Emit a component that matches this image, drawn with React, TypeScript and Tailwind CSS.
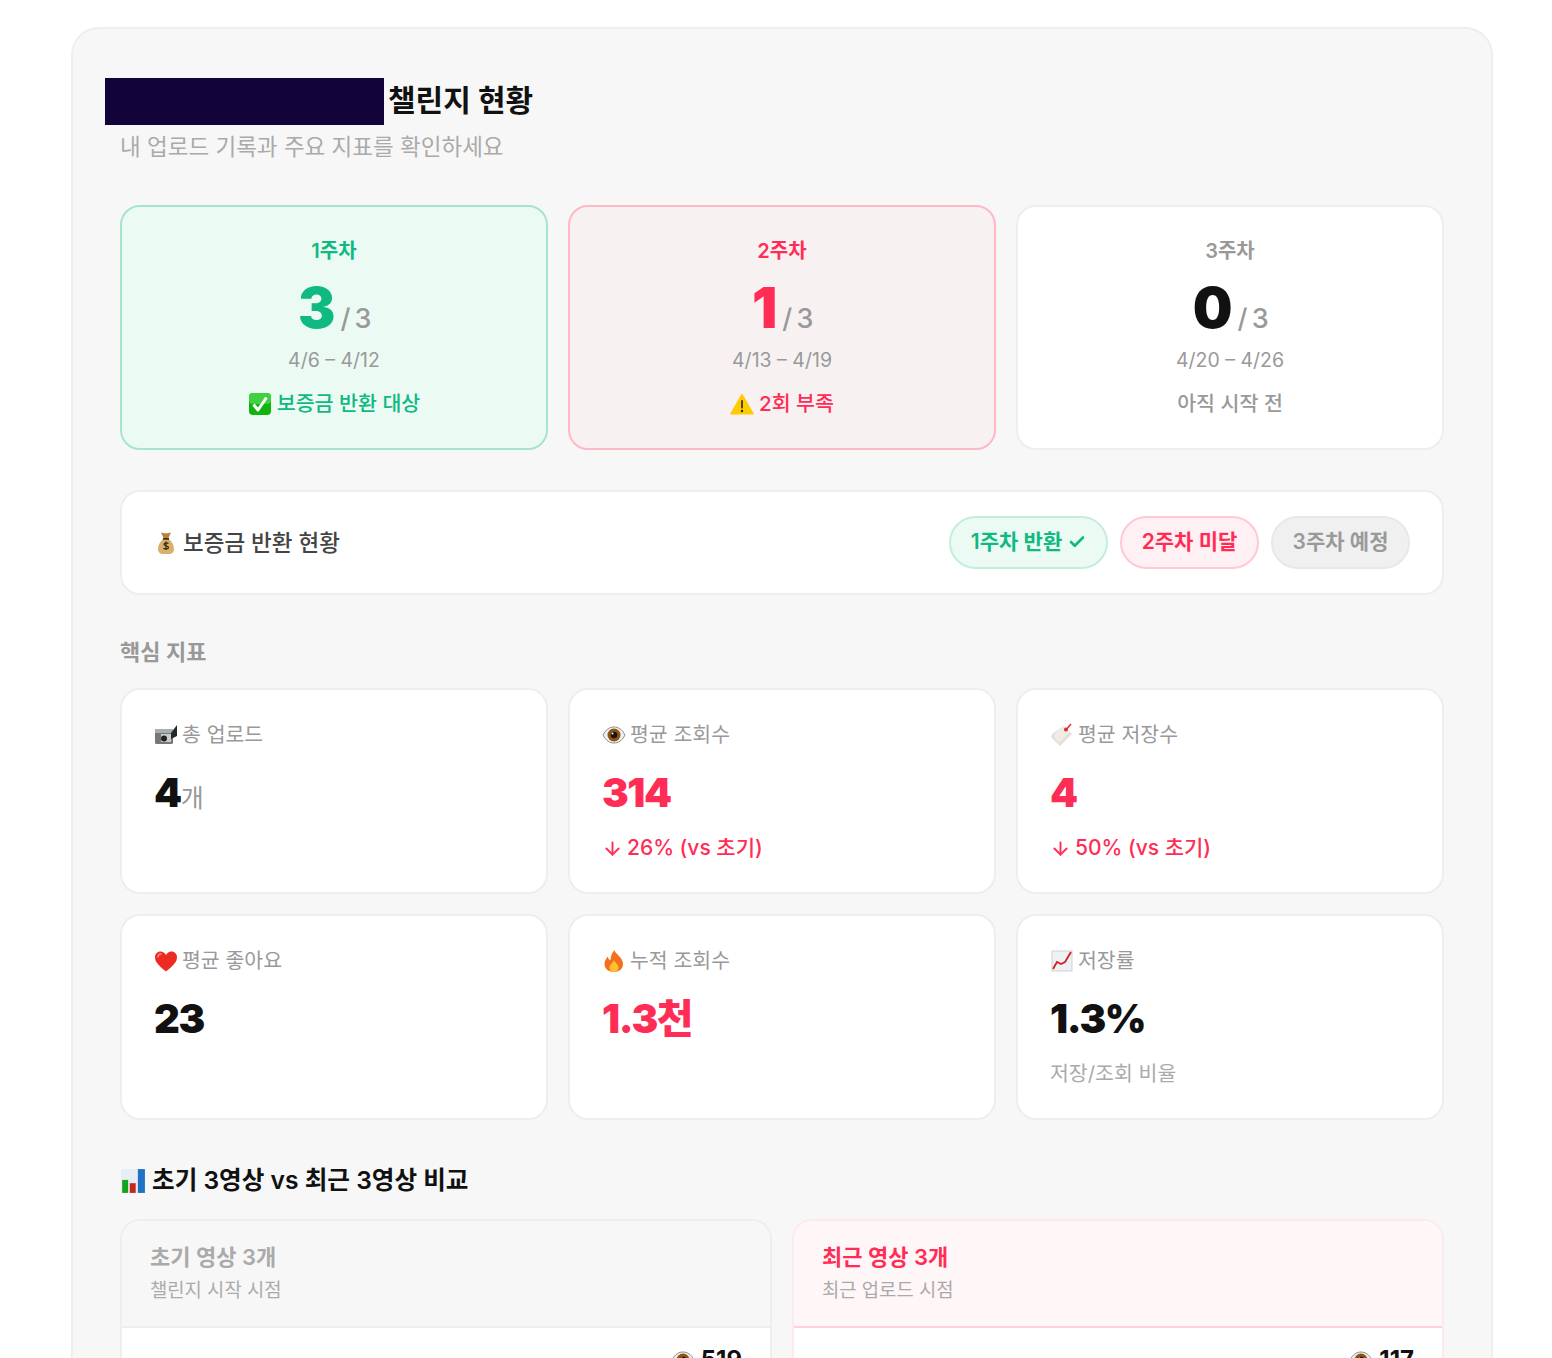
import { FC } from 'react';
import { Check, ArrowDown } from 'lucide-react';

const CheckEmoji = () => (
  <svg width="24" height="24" viewBox="0 0 24 24">
    <rect x="1" y="1" width="22" height="22" rx="4" fill="#0fb40f" />
    <rect x="1" y="1" width="22" height="11" rx="4" fill="#3fd13f" />
    <path d="M5.500 12.500 10 18 18.500 5.500" fill="none" stroke="#fff" strokeWidth="3" strokeLinejoin="round" />
  </svg>
);

const WarningEmoji = () => (
  <svg width="24" height="22" viewBox="0 0 24 22">
    <path d="M12 1 23.500 21H.5z" fill="#fc0" stroke="#fc0" strokeLinejoin="round" />
    <rect x="11.200" y="7" width="1.600" height="8.500" rx=".8" fill="#222" />
    <circle cx="12" cy="18" r="1.200" fill="#222" />
  </svg>
);

const MoneyBag = () => (
  <svg width="22" height="24" viewBox="0 0 22 24">
    <path d="M6 1.500c2 1 8 1 10 0l-3 6.500H9z" fill="#b5813c" />
    <path d="M8 8h6c3.500 3 5 7 5 10 0 3.500-2 5-5 5H8c-3 0-5-1.500-5-5 0-3 1.500-7 5-10z" fill="#d8b06c" />
    <rect x="8" y="7" width="6" height="1.800" fill="#4a3216" />
    <path d="M13.500 12.500c-1-1-4.500-1-4.500.8s4.500 1.200 4.500 3.200-3.500 1.700-5 .7M11 10.500v8.500" fill="none" stroke="#3e2a12" strokeWidth="1.300" />
  </svg>
);

const CameraEmoji = () => (
  <svg width="24" height="24" viewBox="0 0 24 24">
    <rect x="1" y="6" width="18" height="15" rx="1.500" fill="#74787b" />
    <rect x="1" y="6" width="18" height="4" fill="#a9adaf" />
    <path d="M17 10 23 2v11l-6 3z" fill="#26282a" />
    <rect x="7" y="11" width="10" height="8" fill="#c9cccd" />
    <circle cx="10" cy="15.500" r="3" fill="#222" />
  </svg>
);

const EyeEmoji = () => (
  <svg width="24" height="24" viewBox="0 0 24 24">
    <path d="M1 12c3-6 7-8 11-8s8 2 11 8c-3 6-7 8-11 8S4 18 1 12z" fill="#f1efec" stroke="#8f8f8f" />
    <circle cx="12" cy="12" r="6.500" fill="#8a5514" />
    <circle cx="12" cy="12" r="3.300" fill="#1c1207" />
    <circle cx="10.500" cy="10.500" r="1" fill="#fff" />
  </svg>
);

const TagEmoji = () => (
  <svg width="24" height="24" viewBox="0 0 24 24">
    <path d="M14 3 22 11 10 23 1 14 3 10z" fill="#e3dfd8" />
    <path d="M14 3 20 9 9 20 4 14 5 10z" fill="#efece6" />
    <path d="M15 8 21 1" stroke="#e0302a" strokeWidth="1.500" />
    <circle cx="16" cy="6.500" r="2" fill="#e0302a" />
  </svg>
);

const HeartEmoji = () => (
  <svg width="24" height="24" viewBox="0 0 24 24">
    <path d="M12 22.500C4 16 1 12.500 1 8.200 1 4.800 3.500 2.500 6.500 2.500c2.300 0 4.300 1.300 5.500 3.500 1.200-2.200 3.200-3.500 5.500-3.500 3 0 5.500 2.300 5.500 5.700 0 4.300-3 7.800-11 14.300z" fill="#ec2c22" />
    <path d="M4 8c0-2 1.500-3 3-3" fill="none" stroke="#ff8a80" strokeWidth="1.500" strokeLinecap="round" />
  </svg>
);

const FireEmoji = () => (
  <svg width="24" height="24" viewBox="0 0 24 24">
    <path d="M12.500 1c.5 4 8.500 7 8.500 14 0 5-4 8-9 8s-9.500-3-9.500-8c0-3 1.500-5.500 3.500-7.500 0 2 1 3.500 2.500 3.500 0-4 1.500-7 4-10z" fill="#f4701c" />
    <path d="M12 11c.5 2.500 4.500 4 4.500 7.500 0 2.500-2 4.500-4.500 4.500s-4.500-2-4.500-4.500c0-3 3.500-4 4.500-7.500z" fill="#fdc02f" />
  </svg>
);

const ChartUpEmoji = () => (
  <svg width="24" height="24" viewBox="0 0 24 24">
    <rect x="2" y="2" width="20" height="20" fill="#eef1f4" stroke="#cdd3d8" />
    <path d="M3 20 7 13 11 15 15 13 21 3" fill="none" stroke="#d4211b" strokeWidth="1.800" />
  </svg>
);

const BarChartEmoji = () => (
  <svg width="26" height="26" viewBox="0 0 24 24">
    <rect x="1" y="1" width="22" height="22" fill="#e6edf3" />
    <rect x="2" y="11" width="5.500" height="12" fill="#12a51c" />
    <rect x="9" y="14" width="5.500" height="9" fill="#c8281c" />
    <rect x="16.500" y="1" width="6.500" height="22" fill="#1f72c4" />
  </svg>
);

const tones = {
  green: { card: 'bg-[#ebfbf4] border-[#a6e5c9]', text: 'text-[#10b981]' },
  red: { card: 'bg-[#f7f1f2] border-[#ffb8c5]', text: 'text-[#ff2d55]' },
  gray: { card: 'bg-white border-[#eeeeee]', text: 'text-[#999999]' },
};

const WeekCard: FC<{
  tone: 'green' | 'red' | 'gray';
  week: string;
  count: string;
  countClass: string;
  range: string;
  status: React.ReactNode;
}> = ({ tone, week, count, countClass, range, status }) => (
  <div className={`flex h-[245px] flex-col items-center rounded-[20px] border-2 pt-[30px] ${tones[tone].card}`}>
    <div className={`text-[20px] leading-[28px] font-semibold ${tones[tone].text}`}>{week}</div>
    <div className="mt-[11px] flex h-[64px] items-baseline">
      <span className={`text-[56px] leading-[64px] font-black ${countClass}`}>{count}</span>
      <span className="ml-[5px] text-[27px] font-medium tracking-[-1.5px] text-[#999999]">/ 3</span>
    </div>
    <div className="mt-[5px] text-[19.500px] leading-[30px] text-[#999999]">{range}</div>
    <div className={`mt-[14px] flex items-center gap-[5px] text-[20.600px] leading-[30px] font-medium ${tones[tone].text}`}>
      {status}
    </div>
  </div>
);

const Pill: FC<{ className: string; children: React.ReactNode }> = ({ className, children }) => (
  <div className={`flex h-[53px] items-center justify-center gap-[6px] rounded-full border-2 pb-[2px] text-[21px] font-semibold ${className}`}>
    {children}
  </div>
);

const metrics = [
  { icon: <CameraEmoji />, label: '총 업로드', value: '4', unit: '개', color: 'text-[#111111]' },
  { icon: <EyeEmoji />, label: '평균 조회수', value: '314', delta: '26% (vs 초기)', color: 'text-[#ff2d55]' },
  { icon: <TagEmoji />, label: '평균 저장수', value: '4', delta: '50% (vs 초기)', color: 'text-[#ff2d55]' },
  { icon: <HeartEmoji />, label: '평균 좋아요', value: '23', color: 'text-[#111111]' },
  { icon: <FireEmoji />, label: '누적 조회수', value: '1.3천', color: 'text-[#ff2d55]' },
  { icon: <ChartUpEmoji />, label: '저장률', value: '1.3%', note: '저장/조회 비율', color: 'text-[#111111]' },
];

const CompareCard: FC<{
  title: string;
  sub: string;
  views: string;
  outerClass: string;
  headClass: string;
  titleClass: string;
}> = ({ title, sub, views, outerClass, headClass, titleClass }) => (
  <div className={`overflow-hidden rounded-t-[20px] border-2 bg-white ${outerClass}`}>
    <div className={`h-[107px] border-b-2 px-[28px] pt-[20px] ${headClass}`}>
      <div className={`text-[22px] leading-[32px] font-semibold ${titleClass}`}>{title}</div>
      <div className="mt-[3px] text-[18.800px] leading-[30px] text-[#aaaaaa]">{sub}</div>
    </div>
    <div className="flex justify-end gap-[6px] px-[28px] pt-[18px] text-[24px] leading-[28px] font-bold text-[#111111]">
      <span className="mt-[2px]">
        <EyeEmoji />
      </span>
      {views}
    </div>
  </div>
);

export default function App() {
  return (
    <div
      className="h-[1358px] overflow-hidden bg-white pt-[27px] pr-[59px] pl-[71px]"
      style={{ fontFamily: 'Inter, "Noto Sans CJK KR", sans-serif' }}
    >
      <div className="h-[1500px] rounded-[28px] border-2 border-[#eeeeee] bg-[#f7f7f7] px-[47px] pt-[49px]">
        <div className="flex items-center">
          <div className="-ml-[15px] h-[47px] w-[279px] bg-[#12033a]" />
          <h1 className="ml-[4px] pb-[4px] text-[30px] leading-[42px] font-bold text-[#111111]">챌린지 현황</h1>
        </div>
        <p className="mt-[4px] text-[22.500px] leading-[36px] text-[#aaaaaa]">내 업로드 기록과 주요 지표를 확인하세요</p>

        <div className="mt-[40px] grid grid-cols-3 gap-[20px]">
          <WeekCard
            tone="green"
            week="1주차"
            count="3"
            countClass="text-[#10b981]"
            range="4/6 – 4/12"
            status={
              <>
                <CheckEmoji />
                보증금 반환 대상
              </>
            }
          />
          <WeekCard
            tone="red"
            week="2주차"
            count="1"
            countClass="text-[#ff2d55]"
            range="4/13 – 4/19"
            status={
              <>
                <WarningEmoji />
                2회 부족
              </>
            }
          />
          <WeekCard
            tone="gray"
            week="3주차"
            count="0"
            countClass="text-[#111111]"
            range="4/20 – 4/26"
            status="아직 시작 전"
          />
        </div>

        <div className="mt-[40px] flex h-[105px] items-center justify-between rounded-[20px] border-2 border-[#eeeeee] bg-white pr-[32px] pl-[33px]">
          <div className="flex items-center gap-[6px] text-[22.500px] font-medium text-[#444444]">
            <MoneyBag />
            <span className="pt-[1px]">보증금 반환 현황</span>
          </div>
          <div className="flex gap-[12px]">
            <Pill className="w-[159px] border-[#c3eedb] bg-[#ebfbf4] text-[#10b981]">
              1주차 반환 <Check size={18} strokeWidth={3.500} />
            </Pill>
            <Pill className="w-[139px] border-[#ffc9d4] bg-[#fff0f3] text-[#ff2d55]">2주차 미달</Pill>
            <Pill className="w-[139px] border-[#e8e8e8] bg-[#f0f0f0] text-[#999999]">3주차 예정</Pill>
          </div>
        </div>

        <div className="mt-[42px] text-[22px] leading-[31px] font-semibold text-[#999999]">핵심 지표</div>

        <div className="mt-[20px] grid grid-cols-3 gap-[20px]">
          {metrics.map((m) => (
            <div key={m.label} className="h-[206px] rounded-[20px] border-2 border-[#eeeeee] bg-white px-[32px] pt-[29px]">
              <div className="flex items-center gap-[4px] text-[20.500px] leading-[32px] text-[#999999]">
                {m.icon}
                {m.label}
              </div>
              <div className="mt-[12px] flex h-[60px] items-baseline">
                <span className={`text-[40px] leading-[60px] font-black tracking-[-1.400px] ${m.color}`}>{m.value}</span>
                {m.unit && <span className="text-[25px] text-[#999999]">{m.unit}</span>}
              </div>
              {m.delta && (
                <div className="mt-[9px] flex items-center gap-[4px] text-[21px] leading-[32px] font-medium text-[#ff2d55]">
                  <ArrowDown size={21} strokeWidth={2.200} />
                  {m.delta}
                </div>
              )}
              {m.note && <div className="mt-[9px] text-[20.500px] leading-[32px] text-[#aaaaaa]">{m.note}</div>}
            </div>
          ))}
        </div>

        <div className="mt-[42px] flex items-center gap-[6px] text-[24.600px] leading-[37px] font-semibold text-[#111111]">
          <BarChartEmoji />
          초기 3영상 vs 최근 3영상 비교
        </div>

        <div className="mt-[20px] grid grid-cols-2 gap-[20px]">
          <CompareCard
            title="초기 영상 3개"
            sub="챌린지 시작 시점"
            views="519"
            outerClass="border-[#eeeeee]"
            headClass="border-[#eeeeee] bg-[#f7f7f7]"
            titleClass="text-[#aaaaaa]"
          />
          <CompareCard
            title="최근 영상 3개"
            sub="최근 업로드 시점"
            views="117"
            outerClass="border-[#fbeaee]"
            headClass="border-[#ffd3dc] bg-[#fff6f8]"
            titleClass="text-[#ff2d55]"
          />
        </div>
      </div>
    </div>
  );
}
